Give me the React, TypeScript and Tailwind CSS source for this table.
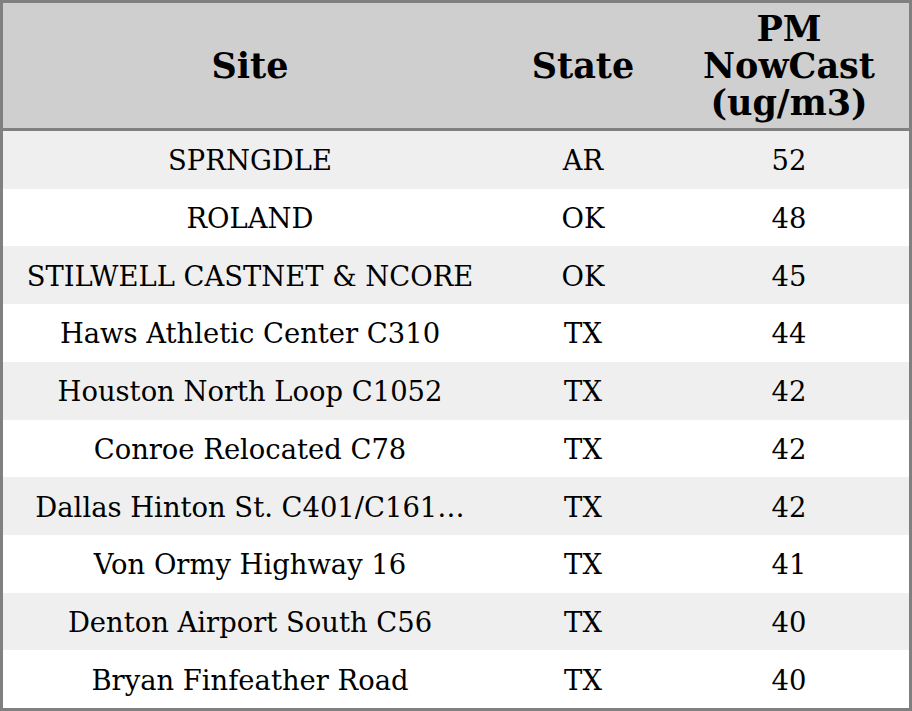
import React from "react";

const rows: [string, string, string][] = [
  ["SPRNGDLE", "AR", "52"],
  ["ROLAND", "OK", "48"],
  ["STILWELL CASTNET & NCORE", "OK", "45"],
  ["Haws Athletic Center C310", "TX", "44"],
  ["Houston North Loop C1052", "TX", "42"],
  ["Conroe Relocated C78", "TX", "42"],
  ["Dallas Hinton St. C401/C161\u2026", "TX", "42"],
  ["Von Ormy Highway 16", "TX", "41"],
  ["Denton Airport South C56", "TX", "40"],
  ["Bryan Finfeather Road", "TX", "40"],
];

export default function App() {
  return (
    <div
      className="w-[912px] h-[711px] border-[3px] border-[#808080] bg-white text-black flex flex-col"
      style={{ fontFamily: '"DejaVu Serif", serif' }}
    >
      <div className="h-[125px] shrink-0 bg-[#cfcfcf] grid grid-cols-[494px_172px_1fr] items-center text-center font-bold text-[35px] leading-[37px]">
        <div>Site</div>
        <div>State</div>
        <div>
          PM
          <br />
          NowCast
          <br />
          (ug/m3)
        </div>
      </div>
      <div className="h-[3px] shrink-0 bg-[#808080]" />
      <div className="flex-1 flex flex-col">
        {rows.map((r, i) => (
          <div
            key={i}
            className={`flex-1 grid grid-cols-[494px_172px_1fr] items-center text-center text-[27.4px] pt-[2px] ${
              i % 2 === 0 ? "bg-[#efefef]" : "bg-white"
            }`}
          >
            <div className="whitespace-nowrap">{r[0]}</div>
            <div>{r[1]}</div>
            <div>{r[2]}</div>
          </div>
        ))}
      </div>
    </div>
  );
}
